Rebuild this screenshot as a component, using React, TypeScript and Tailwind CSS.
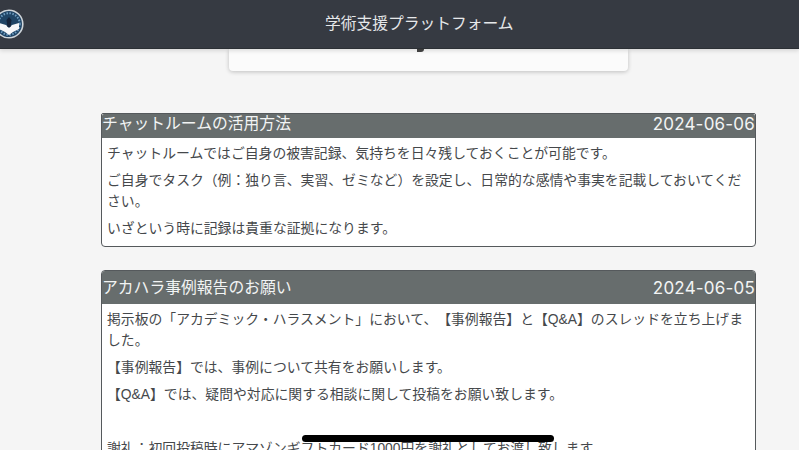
const notices = [
  {
    title: "チャットルームの活用方法",
    date: "2024-06-06",
    headClass: "h-[24px] items-start rounded-t-[2px]",
    cardClass: "rounded-[4px] rounded-t-[2px]",
    body: [
      "チャットルームではご自身の被害記録、気持ちを日々残しておくことが可能です。",
      "ご自身でタスク（例：独り言、実習、ゼミなど）を設定し、日常的な感情や事実を記載しておいてください。",
      "いざという時に記録は貴重な証拠になります。",
    ],
  },
  {
    title: "アカハラ事例報告のお願い",
    date: "2024-06-05",
    headClass: "h-[33px] items-end pb-[6px]",
    cardClass: "rounded-[4px]",
    body: [
      "掲示板の「アカデミック・ハラスメント」において、【事例報告】と【Q&A】のスレッドを立ち上げました。",
      "【事例報告】では、事例について共有をお願いします。",
      "【Q&A】では、疑問や対応に関する相談に関して投稿をお願い致します。",
      "",
      "謝礼：初回投稿時にアマゾンギフトカード1000円を謝礼としてお渡し致します。",
    ],
  },
];

function Logo() {
  return (
    <svg viewBox="0 0 30 30" className="absolute left-[-6px] top-[9px] h-[30px] w-[30px]">
      <circle cx="15" cy="15" r="13.8" fill="#1f4465" stroke="#cfd5da" strokeWidth="1.6" />
      <circle cx="15" cy="15" r="10.8" fill="none" stroke="#6d9cc0" strokeWidth="2" strokeDasharray="1.5 1.5" />
      <path d="M5 14l7 2 3 3 3-3 7-2v6l-6 3-4 3-4-3-6-3z" fill="#f6f7f9" />
      <path d="M12.5 11l2.500-3 2.500 3-1 7h-3z" fill="#14233a" />
    </svg>
  );
}

export default function App() {
  return (
    <div className="relative h-[450px] w-[799px] overflow-hidden bg-[#f5f5f5] font-['Liberation_Sans','Noto_Sans_CJK_JP',sans-serif] text-[#45484b] [text-spacing-trim:space-all]">
      <header className="relative z-10 flex h-[49px] items-center border-b border-[#2c3035] bg-[#363a42] pl-[325px] shadow-[0_2px_4px_rgba(0,0,0,0.12)]">
        <Logo />
        <h1 className="text-[15.75px] font-normal text-[#e6e8ea]">学術支援プラットフォーム</h1>
      </header>

      <div className="relative ml-[229px] h-[22px] w-[399px] rounded-b-[4px] bg-[#fbfbfb] shadow-[0_1px_4px_rgba(0,0,0,0.22)]">
        <div className="absolute left-[188px] top-0 h-[3px] w-[7px] rounded-br-[3px] bg-[#444]" />
      </div>

      <main className="ml-[101px] mt-[42px] flex w-[655px] flex-col gap-[23px]">
        {notices.map((n) => (
          <section key={n.date} className={`overflow-hidden border border-[#55595c] bg-white ${n.cardClass}`}>
            <div className={`flex justify-between bg-[#676d6d] text-[#f2f4f4] ${n.headClass}`}>
              <span className="text-[15.8px] leading-[20px]">{n.title}</span>
              <span className="font-['Inter','Liberation_Sans',sans-serif] text-[17px] leading-[20px] tracking-[0.2px]">{n.date}</span>
            </div>
            <div className="flex flex-col gap-[6.5px] px-[5px] pb-[7.6px] pt-[5px] text-[13.83px] leading-[20.6px]">
              {n.body.map((line, i) => (
                <p key={i} className="min-h-[20.6px]">{line}</p>
              ))}
            </div>
          </section>
        ))}
      </main>

      <div className="absolute left-[302px] top-[435px] h-[7px] w-[252px] rounded-full bg-black" />
    </div>
  );
}
